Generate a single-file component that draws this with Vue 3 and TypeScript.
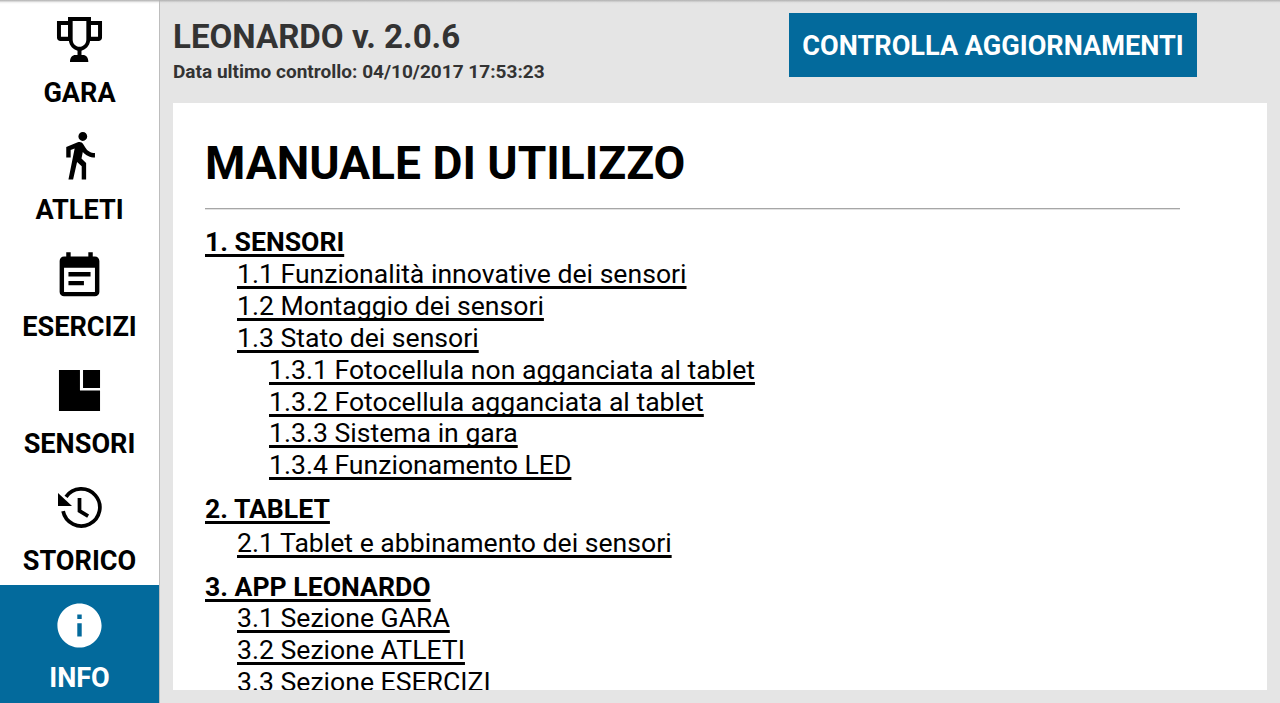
<script setup lang="ts">
interface NavItem { label: string; path: string; line?: string; vb?: string; active?: boolean }
const nav: NavItem[] = [
  { label: 'GARA', path: 'M6.8 1.400H17.200V3.200H22.200V10.600C22.200 11.500 21.500 12.200 20.600 12.200H16.800C16.400 14.400 15 16 12.900 16.600V18.600H13.500C15 18.600 16 19.800 16 21.700H7.700C7.700 19.800 8.700 18.600 10.200 18.600H11.100V16.600C9 16 7.600 14.400 7.200 12.200H3.400C2.500 12.200 1.800 11.500 1.800 10.600V3.200H6.800ZM8.900 3.200V11.500C8.900 13.400 10.300 14.800 12 14.800S15.100 13.400 15.100 11.500V3.200ZM3.600 5V10.300H6.800V5ZM17.200 5V10.300H20.400V5Z' },
  { label: 'ATLETI', vb: '0 1 24 24', path: 'M13.500 5.500c1.100 0 2-.9 2-2s-.9-2-2-2-2 .9-2 2 .9 2 2 2zM9.800 8.900L7 23h2.100l1.800-8 2.100 2v6h2v-7.500l-2.100-2 .6-3C14.800 12 16.800 13 19 13v-2c-1.900 0-3.500-1-4.300-2.400l-1-1.600c-.4-.6-1-1-1.700-1-.3 0-.5.1-.8.1L6 8.300V13h2V9.600l1.800-.7' },
  { label: 'ESERCIZI', vb: '0 -0.9 24 24', path: 'M17 10H7v2h10v-2zm2-7h-1V1h-2v2H8V1H6v2H5c-1.110 0-1.990.9-1.990 2L3 19c0 1.100.89 2 2 2h14c1.100 0 2-.9 2-2V5c0-1.100-.9-2-2-2zm0 16H5V8h14v11zm-5-5H7v2h7v-2z' },
  { label: 'SENSORI', path: 'M2.700 2.300H12.200V11.500H21.300V20.800H2.700ZM13.600 2.300H21.300V10.400H13.600Z' },
  { label: 'STORICO', path: 'M2.260 5L8.600 10.900H2.260Z', line: 'M5.900 6.750A8.400 8.400 0 1 1 4.570 13.200M12 7.200V13.100L15.900 15.400' },
  { label: 'INFO', active: true, path: 'M12 2C6.480 2 2 6.480 2 12s4.480 10 10 10 10-4.480 10-10S17.520 2 12 2zm1 15h-2v-6h2v6zm0-8h-2V7h2v2z' },
]
interface TocLine { text: string; level: number; head?: boolean }
const toc: TocLine[] = [
  { text: '1. SENSORI', level: 0, head: true },
  { text: '1.1 Funzionalità innovative dei sensori', level: 1 },
  { text: '1.2 Montaggio dei sensori', level: 1 },
  { text: '1.3 Stato dei sensori', level: 1 },
  { text: '1.3.1 Fotocellula non agganciata al tablet', level: 2 },
  { text: '1.3.2 Fotocellula agganciata al tablet', level: 2 },
  { text: '1.3.3 Sistema in gara', level: 2 },
  { text: '1.3.4 Funzionamento LED', level: 2 },
  { text: '2. TABLET', level: 0, head: true },
  { text: '2.1 Tablet e abbinamento dei sensori', level: 1 },
  { text: '3. APP LEONARDO', level: 0, head: true },
  { text: '3.1 Sezione GARA', level: 1 },
  { text: '3.2 Sezione ATLETI', level: 1 },
  { text: '3.3 Sezione ESERCIZI', level: 1 },
]
</script>

<template>
  <div class="app">
    <nav class="side">
      <a v-for="n in nav" :key="n.label" class="item" :class="{ active: n.active }">
        <svg class="icon" :viewBox="n.vb || '0 0 24 24'">
          <path :d="n.path" fill="currentColor" fill-rule="evenodd" />
          <path v-if="n.line" :d="n.line" fill="none" stroke="currentColor" stroke-width="1.700" />
        </svg>
        <span class="label">{{ n.label }}</span>
      </a>
    </nav>
    <main class="main">
      <header class="top">
        <div class="version">
          <h2>LEONARDO v. 2.0.6</h2>
          <p>Data ultimo controllo: 04/10/2017 17:53:23</p>
        </div>
        <button class="update"><span>CONTROLLA AGGIORNAMENTI</span></button>
      </header>
      <section class="card">
        <div class="doc">
          <h1>MANUALE DI UTILIZZO</h1>
          <hr />
          <ul class="toc">
            <li v-for="l in toc" :key="l.text" :class="['lv' + l.level, { head: l.head }]">
              <u>{{ l.text }}</u>
            </li>
          </ul>
        </div>
      </section>
    </main>
    <div class="shade"></div>
  </div>
</template>

<style>
html, body { margin: 0; height: 100%; overflow: hidden; }
</style>

<style scoped>
.app {
  position: relative;
  display: flex;
  width: 1280px;
  height: 703px;
  overflow: hidden;
  font-family: Roboto, "Liberation Sans", sans-serif;
  background: #e5e5e5;
}
.shade {
  position: absolute;
  left: 0; right: 0; top: 0;
  height: 4px;
  background: linear-gradient(#b0b0b0, rgba(200,200,200,.25) 60%, rgba(255,255,255,0));
}
.side {
  flex: none;
  width: 159px;
  background: #fff;
  border-right: 1px solid #bdbdbd;
  display: flex;
  flex-direction: column;
}
.item {
  flex: none;
  height: 117px;
  display: flex;
  flex-direction: column;
  align-items: center;
  color: #000;
}
.item.active { background: #036a9c; color: #fff; height: 118px; }
.icon { width: 53px; height: 53px; margin-top: 14px; display: block; }
.label {
  font-size: 27.100px;
  font-weight: 700;
  line-height: 32px;
  margin-top: 10px;
}
.main {
  flex: 1;
  min-width: 0;
  display: flex;
  flex-direction: column;
  padding: 13px;
}
.top {
  flex: none;
  height: 90px;
  display: flex;
  align-items: flex-start;
  color: #333;
}
.version { width: 616px; }
.version h2 {
  margin: 4px 0 0;
  font-size: 33.100px;
  line-height: 40px;
  font-weight: 700;
}
.version p {
  margin: 4px 0 0;
  font-size: 19.050px;
  line-height: 22px;
  font-weight: 700;
}
.update {
  width: 408px;
  height: 64px;
  border: 0;
  padding: 2px 0 0;
  background: #036a9c;
  color: #fff;
  font: 700 27.100px Roboto, "Liberation Sans", sans-serif;
}
.card {
  flex: 1;
  min-height: 0;
  background: #fff;
  overflow: hidden;
}
.doc { width: 975px; padding: 0 0 0 32px; color: #000; }
h1 {
  margin: 28px 0 0;
  font-size: 46.100px;
  line-height: 64px;
  font-weight: 700;
}
hr {
  margin: 13px 0 0;
  border: 0;
  height: 2px;
  background: linear-gradient(#a6a6a6 50%, #e2e2e2 50%);
}
.toc { list-style: none; margin: 16px 0 0; padding: 0; }
.toc li { font-size: 26.600px; line-height: 31.900px; }
.toc u {
  text-decoration-thickness: 2.500px;
  text-underline-offset: 3px;
  text-decoration-skip-ink: none;
}
.toc .lv1 { padding-left: 32px; }
.toc .lv2 { padding-left: 64px; }
.toc .head { font-weight: 700; }
.toc .lv1 + .head, .toc .lv2 + .head { margin-top: 12px; }
.toc .lv2 + .head + .lv1 { margin-top: 1.500px; }
</style>
